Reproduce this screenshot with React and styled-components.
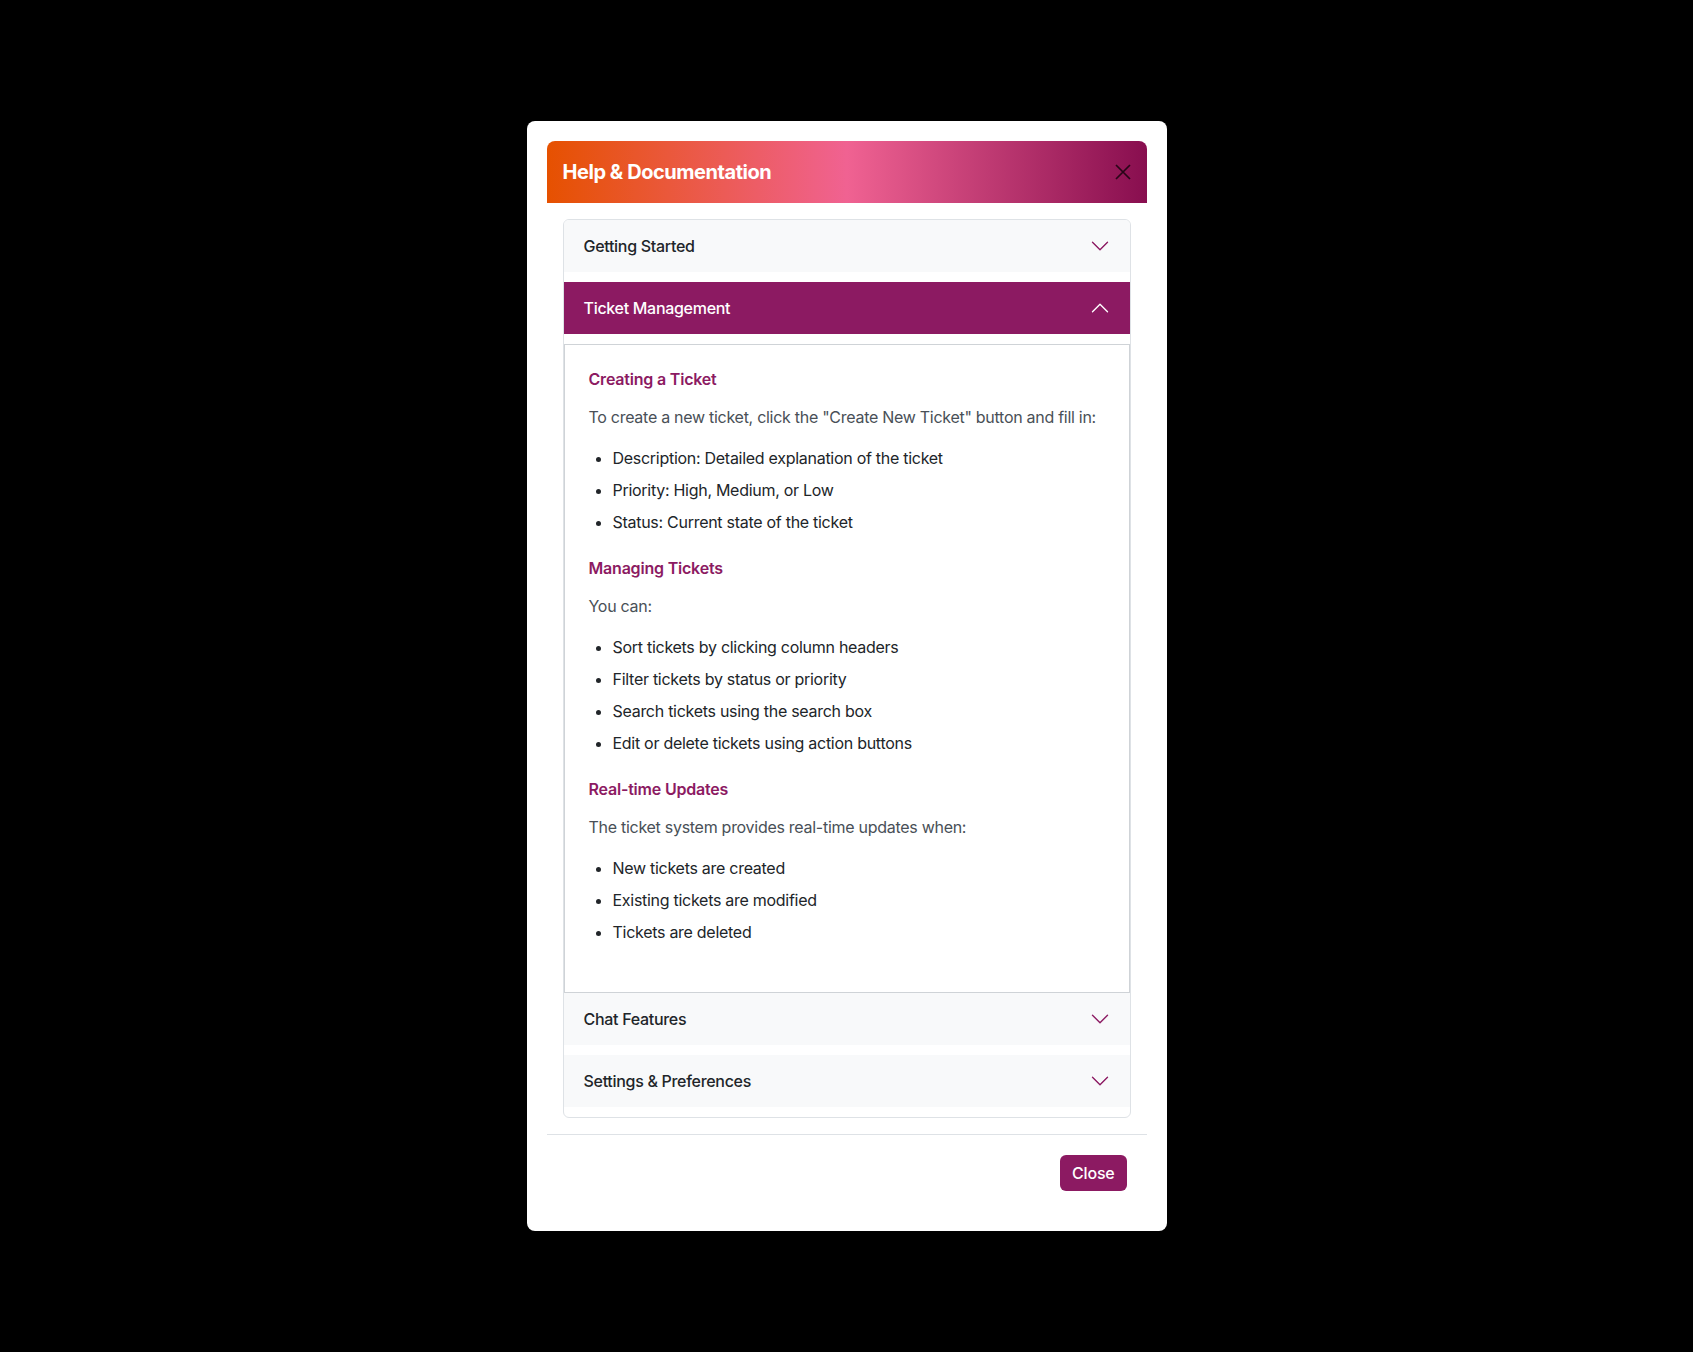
import React, { useState } from "react";
import styled, { createGlobalStyle } from "styled-components";

const GlobalStyle = createGlobalStyle`
  * { box-sizing: border-box; }
  html, body { margin: 0; padding: 0; background: #000; }
  body {
    font-family: Inter, "Noto Sans", "Liberation Sans", sans-serif;
    font-size: 16px;
    line-height: 1.5;
    letter-spacing: -0.28px;
    color: #212529;
    -webkit-font-smoothing: antialiased;
  }
`;

const ACCENT = "#8c1a62";

const Backdrop = styled.div`
  min-height: 1352px;
  display: flex;
  align-items: center;
  justify-content: center;
  background: #000;
`;

const Dialog = styled.div`
  width: 640px;
  background: #fff;
  border-radius: 8px;
  padding: 20px;
  display: flex;
  flex-direction: column;
`;

const Header = styled.div`
  display: flex;
  align-items: center;
  justify-content: space-between;
  padding: 16px;
  border-radius: 8px 8px 0 0;
  background: linear-gradient(90deg, #e65100 0%, #f06292 50%, #880e4f 100%);
`;

const Title = styled.h5`
  margin: 0;
  font-size: 20px;
  line-height: 30px;
  font-weight: 700;
  color: #fff;
  letter-spacing: -0.45px;
`;

const CloseX = styled.button`
  width: 16px;
  height: 16px;
  padding: 0;
  border: 0;
  background: transparent;
  display: flex;
  align-items: center;
  justify-content: center;
  opacity: 0.72;
  cursor: pointer;
`;

const Body = styled.div`
  padding: 16px;
`;

const Accordion = styled.div`
  border: 1px solid #dee2e6;
  border-radius: 6px;
  overflow: hidden;
`;

const Item = styled.div`
  & + & {
    border-top: ${(p) => (p.$afterOpen ? "none" : "1px solid #dee2e6")};
  }
`;

const ItemButton = styled.button`
  width: 100%;
  display: flex;
  align-items: center;
  justify-content: space-between;
  padding: 14px 20px;
  margin: 0 0 10px 0;
  border: 0;
  font-family: inherit;
  font-size: 16px;
  line-height: 24px;
  font-weight: 500;
  letter-spacing: -0.3px;
  text-align: left;
  cursor: pointer;
  background: ${(p) => (p.$open ? ACCENT : "#f8f9fa")};
  color: ${(p) => (p.$open ? "#fff" : "#212529")};
`;

const Chevron = styled.svg`
  width: 20px;
  height: 20px;
  flex: none;
  transform: ${(p) => (p.$open ? "rotate(180deg)" : "none")};
`;

const Panel = styled.div`
  border: 1px solid #cfd3d7;
  padding: 24px;
`;

const SectionTitle = styled.h6`
  margin: 0 0 16px 0;
  font-size: 16px;
  line-height: 20px;
  font-weight: 600;
  letter-spacing: -0.2px;
  color: ${ACCENT};
`;

const Text = styled.p`
  margin: 0 0 17px 0;
  color: #495057;
  line-height: 24px;
`;

const List = styled.ul`
  margin: 0 0 24px 0;
  padding-left: 24px;
`;

const ListItem = styled.li`
  line-height: 24px;
  margin-bottom: 8px;
  color: #212529;
`;

const Footer = styled.div`
  border-top: 1px solid #dee2e6;
  padding: 20px;
  display: flex;
  justify-content: flex-end;
`;

const PrimaryButton = styled.button`
  border: 0;
  border-radius: 6px;
  background: ${ACCENT};
  color: #fff;
  font-family: inherit;
  font-size: 16px;
  line-height: 24px;
  font-weight: 500;
  letter-spacing: -0.2px;
  padding: 6px 12px;
  cursor: pointer;
`;

const sections = [
  { id: "start", title: "Getting Started" },
  { id: "tickets", title: "Ticket Management" },
  { id: "chat", title: "Chat Features" },
  { id: "settings", title: "Settings & Preferences" },
];

const ticketContent = [
  {
    heading: "Creating a Ticket",
    text: 'To create a new ticket, click the "Create New Ticket" button and fill in:',
    items: [
      "Description: Detailed explanation of the ticket",
      "Priority: High, Medium, or Low",
      "Status: Current state of the ticket",
    ],
  },
  {
    heading: "Managing Tickets",
    text: "You can:",
    items: [
      "Sort tickets by clicking column headers",
      "Filter tickets by status or priority",
      "Search tickets using the search box",
      "Edit or delete tickets using action buttons",
    ],
  },
  {
    heading: "Real-time Updates",
    text: "The ticket system provides real-time updates when:",
    items: [
      "New tickets are created",
      "Existing tickets are modified",
      "Tickets are deleted",
    ],
  },
];

function ChevronIcon({ open }) {
  return (
    <Chevron $open={open} viewBox="0 0 16 16" fill="none">
      <path
        d="M2 5L8 11L14 5"
        stroke={open ? "#fff" : ACCENT}
        strokeWidth="1.1"
        strokeLinecap="round"
        strokeLinejoin="round"
      />
    </Chevron>
  );
}

export default function App() {
  const [openId, setOpenId] = useState("tickets");
  return (
    <>
      <GlobalStyle />
      <Backdrop>
        <Dialog>
          <Header>
            <Title>Help &amp; Documentation</Title>
            <CloseX aria-label="Close">
              <svg width="16" height="16" viewBox="0 0 16 16">
                <path d="M1 1L15 15M15 1L1 15" stroke="#000" strokeWidth="1.7" />
              </svg>
            </CloseX>
          </Header>
          <Body>
            <Accordion>
              {sections.map((s, i) => {
                const open = openId === s.id;
                const prevOpen = i > 0 && sections[i - 1].id === openId;
                return (
                  <Item key={s.id} $afterOpen={prevOpen}>
                    <ItemButton
                      $open={open}
                      onClick={() => setOpenId(open ? null : s.id)}
                    >
                      <span>{s.title}</span>
                      <ChevronIcon open={open} />
                    </ItemButton>
                    {open && s.id === "tickets" && (
                      <Panel>
                        {ticketContent.map((c) => (
                          <React.Fragment key={c.heading}>
                            <SectionTitle>{c.heading}</SectionTitle>
                            <Text>{c.text}</Text>
                            <List>
                              {c.items.map((t) => (
                                <ListItem key={t}>{t}</ListItem>
                              ))}
                            </List>
                          </React.Fragment>
                        ))}
                      </Panel>
                    )}
                  </Item>
                );
              })}
            </Accordion>
          </Body>
          <Footer>
            <PrimaryButton>Close</PrimaryButton>
          </Footer>
        </Dialog>
      </Backdrop>
    </>
  );
}
